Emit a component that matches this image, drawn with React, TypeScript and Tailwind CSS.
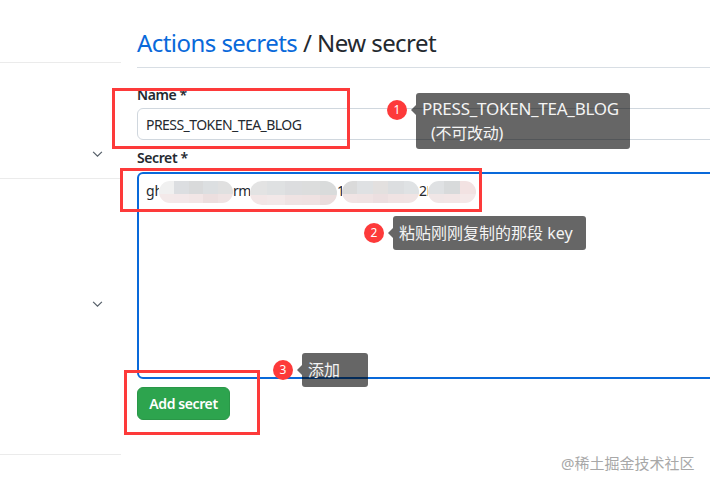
const sans = "font-['Noto_Sans','Noto_Sans_CJK_SC',sans-serif]";

type Cell = [string, string];

function Smudge({ className, cells }: { className: string; cells: Cell[] }) {
  return (
    <div className={`flex shrink-0 overflow-hidden rounded-full ${className}`}>
      {cells.map(([top, bottom], j) => (
        <div key={j} className="flex-1 flex flex-col">
          <div className={`h-[58%] ${top}`} />
          <div className={`flex-1 ${bottom}`} />
        </div>
      ))}
    </div>
  );
}

function Chevron() {
  return (
    <svg viewBox="0 0 12 8" className="w-[11px] h-[7px]" fill="none" stroke="#57606a" strokeWidth="1.4">
      <path d="M1 1l5 5 5-5" />
    </svg>
  );
}

function Callout({ n, className, boxClass, children }: { n: number; className: string; boxClass: string; children: React.ReactNode }) {
  return (
    <div className={`absolute flex items-start gap-[9px] ${className}`}>
      <div className="mt-[7px] w-5 h-5 rounded-full bg-[#fd3a3a] text-white text-xs flex items-center justify-center">{n}</div>
      <div className={`relative bg-black/60 rounded-[3px] text-[#f4f4f4] pl-[6px] pt-[4px] ${boxClass}`}>
        <span className="absolute -left-[5px] top-[12px] border-y-[5px] border-y-transparent border-r-[5px] border-r-black/60" />
        {children}
      </div>
    </div>
  );
}

export default function App() {
  return (
    <div className={`relative h-[487px] overflow-hidden bg-white text-[#24292f] ${sans}`}>
      <div className="flex w-[900px]">
        {/* Sidebar */}
        <aside className="w-[121px] shrink-0">
          <div className="h-[63px] border-b border-[#ebebeb]" />
          <div className="h-[116px] border-b border-[#ebebeb] flex justify-end items-end pb-[20px] pr-[18px]">
            <Chevron />
          </div>
          <div className="h-[276px] border-b border-[#ebebeb] flex justify-end pt-[122px] pr-[18px]">
            <Chevron />
          </div>
        </aside>

        {/* Form */}
        <main className="flex-1 pl-4 pt-[26px]">
          <h1 className="text-[24px] leading-[34px] h-[42px] border-b border-[#d8dee4] tracking-[-0.55px]">
            <span className="text-[#0969da]">Actions secrets</span> / New secret
          </h1>
          <label className="block mt-[17px] text-[14px] leading-[20px] font-semibold tracking-[-0.4px]">Name *</label>
          <div className="mt-[3px] h-[32px] border border-[#d0d7de] rounded-md px-2 flex items-center text-[14px] tracking-[-0.55px]">
            PRESS_TOKEN_TEA_BLOG
          </div>
          <label className="block mt-[8px] text-[14px] leading-[20px] font-semibold tracking-[-0.4px]">Secret *</label>
          <div className="mt-[4px] h-[207px] border-2 border-[#0969da] rounded-md px-[7px] pt-[7px] text-[14px] leading-[20px] flex items-start">
            <span className="w-[13px] shrink-0 overflow-hidden">gh</span>
            <Smudge
              className="w-[74px] h-[22px]"
              cells={[
                ["bg-[#f0f0f0]", "bg-[#f3e9e9]"],
                ["bg-[#dcdee1]", "bg-[#f3e8e9]"],
                ["bg-[#d9dadb]", "bg-[#f2e6e6]"],
                ["bg-[#dcdfe1]", "bg-[#ecdfdf]"],
                ["bg-[#e0e0e0]", "bg-[#efe3e3]"],
              ]}
            />
            <span className="w-[17px] shrink-0 overflow-hidden tracking-[-0.5px]">rmX</span>
            <Smudge
              className="w-[87px] h-[24px]"
              cells={[
                ["bg-[#e3e3e3]", "bg-[#f2e6e6]"],
                ["bg-[#dfe1e2]", "bg-[#f2e8e8]"],
                ["bg-[#dcdddf]", "bg-[#efe3e3]"],
                ["bg-[#dcdddd]", "bg-[#efe2e2]"],
                ["bg-[#d9dbdb]", "bg-[#eadddd]"],
              ]}
            />
            <span className="w-[5px] shrink-0 overflow-hidden">1</span>
            <Smudge
              className="w-[77px] h-[22px]"
              cells={[
                ["bg-[#dadada]", "bg-[#f0e4e4]"],
                ["bg-[#dfe1e3]", "bg-[#efe3e3]"],
                ["bg-[#e3e0df]", "bg-[#ecdfe0]"],
                ["bg-[#dcdee0]", "bg-[#f0e3e3]"],
                ["bg-[#dfe2e4]", "bg-[#f0e4e4]"],
              ]}
            />
            <span className="w-[9px] shrink-0 overflow-hidden tracking-[-0.5px]">2E</span>
            <Smudge
              className="w-[48px] h-[22px]"
              cells={[
                ["bg-[#dfe1e3]", "bg-[#f0e6e6]"],
                ["bg-[#d8dadb]", "bg-[#f2e6e6]"],
                ["bg-[#f2e2e2]", "bg-[#f4e8e8]"],
              ]}
            />
          </div>
          <button className="block mt-2 w-[93px] h-[33px] rounded-md bg-[#2da44e] border border-[#2a9748] text-white text-[14px] font-semibold tracking-[-0.4px]">
            Add secret
          </button>
        </main>
      </div>

      {/* Red annotation boxes */}
      <div className="absolute left-[112px] top-[88px] w-[238px] h-[61px] border-[3px] border-[#fd3a3a]" />
      <div className="absolute left-[120px] top-[168px] w-[362px] h-[44px] border-[3px] border-[#fd3a3a]" />
      <div className="absolute left-[124px] top-[370px] w-[136px] h-[65px] border-[3px] border-[#fd3a3a]" />

      <Callout n={1} className="left-[387px] top-[93px]" boxClass="w-[214px] h-[56px] text-[17px] leading-[24px] tracking-[-0.25px]">
        <div>PRESS_TOKEN_TEA_BLOG</div>
        <div className="pl-[9px] text-[16px]">(不可改动)</div>
      </Callout>

      <Callout n={2} className="left-[364px] top-[216px]" boxClass="w-[193px] h-[34px] text-[16px] leading-[26px]">
        粘贴刚刚复制的那段 key
      </Callout>

      <Callout n={3} className="left-[273px] top-[353px]" boxClass="w-[66px] h-[34px] text-[16px] leading-[26px]">
        添加
      </Callout>

      <div className="absolute left-[561px] top-[452px] text-[15px] leading-[22px] text-[#a8a8a8]">@稀土掘金技术社区</div>
    </div>
  );
}
